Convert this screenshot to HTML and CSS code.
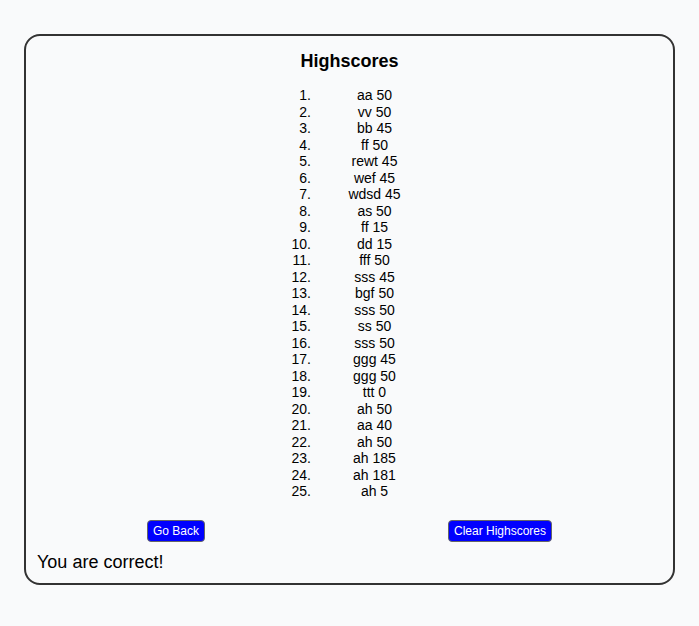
FILE: index.html
```html
<!DOCTYPE html>
<html>
<head>
<meta charset="utf-8">
<link rel="stylesheet" href="styles.css">
</head>
<body>
<div class="card">
  <h1 class="title">Highscores</h1>
  <div class="scores">
    <span class="num">1.</span><span class="name">aa 50</span>
    <span class="num">2.</span><span class="name">vv 50</span>
    <span class="num">3.</span><span class="name">bb 45</span>
    <span class="num">4.</span><span class="name">ff 50</span>
    <span class="num">5.</span><span class="name">rewt 45</span>
    <span class="num">6.</span><span class="name">wef 45</span>
    <span class="num">7.</span><span class="name">wdsd 45</span>
    <span class="num">8.</span><span class="name">as 50</span>
    <span class="num">9.</span><span class="name">ff 15</span>
    <span class="num">10.</span><span class="name">dd 15</span>
    <span class="num">11.</span><span class="name">fff 50</span>
    <span class="num">12.</span><span class="name">sss 45</span>
    <span class="num">13.</span><span class="name">bgf 50</span>
    <span class="num">14.</span><span class="name">sss 50</span>
    <span class="num">15.</span><span class="name">ss 50</span>
    <span class="num">16.</span><span class="name">sss 50</span>
    <span class="num">17.</span><span class="name">ggg 45</span>
    <span class="num">18.</span><span class="name">ggg 50</span>
    <span class="num">19.</span><span class="name">ttt 0</span>
    <span class="num">20.</span><span class="name">ah 50</span>
    <span class="num">21.</span><span class="name">aa 40</span>
    <span class="num">22.</span><span class="name">ah 50</span>
    <span class="num">23.</span><span class="name">ah 185</span>
    <span class="num">24.</span><span class="name">ah 181</span>
    <span class="num">25.</span><span class="name">ah 5</span>
  </div>
  <div class="actions">
    <div class="cell"><button class="btn">Go Back</button></div>
    <div class="cell"><button class="btn">Clear Highscores</button></div>
  </div>
  <p class="result">You are correct!</p>
</div>
</body>
</html>
```

FILE: styles.css
```css
* { box-sizing: border-box; }
html, body {
  margin: 0;
  padding: 0;
  background: #f9fafb;
  font-family: "Liberation Sans", Arial, sans-serif;
  color: #000;
}
.card {
  margin: 34px 0 0 24px;
  width: 651px;
  border: 2px solid #333;
  border-radius: 16px;
  padding: 15px 11px 10px 11px;
}
.title {
  margin: 0;
  font-size: 18px;
  line-height: 21px;
  font-weight: bold;
  text-align: center;
}
.scores {
  margin-top: 15px;
  display: grid;
  grid-template-columns: 40px 127px;
  justify-content: center;
  padding-left: 10px;
  font-size: 14px;
  line-height: 16.5px;
}
.num { text-align: right; }
.name { text-align: center; }
.actions {
  margin-top: 20.5px;
  margin-left: -23px;
  display: grid;
  grid-template-columns: 1fr 1fr;
}
.cell {
  display: flex;
  justify-content: center;
}
.btn {
  font-family: "Liberation Sans", Arial, sans-serif;
  font-size: 12px;
  line-height: 14px;
  height: 22px;
  padding: 3px 5px;
  color: #fff;
  background: #0000ff;
  border: 1px solid #666;
  border-radius: 4px;
}
.result {
  margin: 10px 0 0 0;
  font-size: 18px;
  line-height: 21px;
}
```
